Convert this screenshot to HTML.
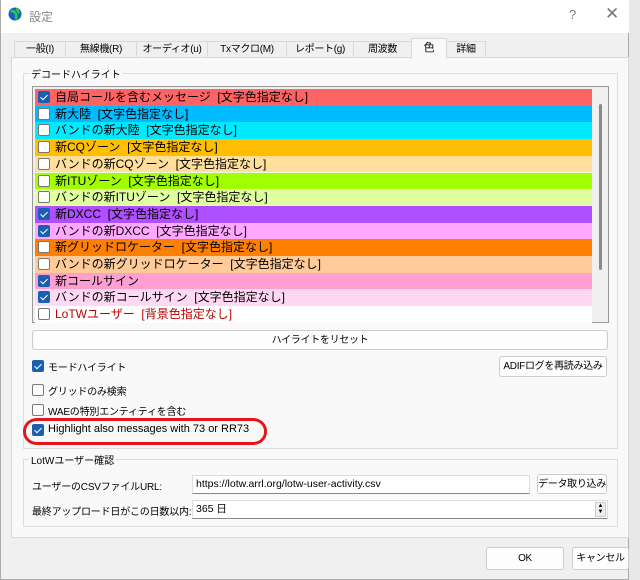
<!DOCTYPE html>
<html><head><meta charset="utf-8"><style>
*{box-sizing:border-box;margin:0;padding:0;white-space:nowrap}
body{width:640px;height:580px;background:#e8e8e8;font-family:"Liberation Sans","Noto Sans CJK JP",sans-serif;font-size:11px;color:#000;position:relative;overflow:hidden}
.win{position:absolute;left:0;top:0;width:629px;height:580px;background:#f0f0f0;border:1px solid #aaa;border-top:none}
.title{position:absolute;left:0;top:0;width:628px;height:33px;background:#fff}
.abs{position:absolute}
.tab{position:absolute;top:41px;height:17px;border:1px solid #d9d9d9;border-bottom:none;background:#f0f0f0;text-align:center;line-height:15px;font-size:10px;letter-spacing:-0.3px;overflow:hidden}
.panel{position:absolute;left:10px;top:57px;width:618px;height:481px;background:#f9f9f9;border:1px solid #d9d9d9}
.group{position:absolute;border:1px solid #dcdcdc}
.glabel{position:absolute;background:#f9f9f9;padding:0 2px;font-size:10px}
.list{position:absolute;left:31px;top:86px;width:577px;height:237px;border:1px solid #999;background:#f0f0f0}
.row{position:absolute;left:2px;width:557px;height:16.7px;line-height:16px;font-size:12px;padding-left:20px}
.cb{position:absolute;width:12px;height:12px;border:1px solid #777;border-radius:2px;background:#fff}
.cb.on{background:#1a5fb4;border-color:#1a5fb4}
.cb.on::after{content:"";position:absolute;left:3px;top:1px;width:3px;height:6px;border:solid #fff;border-width:0 1.3px 1.3px 0;transform:rotate(45deg)}
.row .cb{left:3px;top:2px}
.btn{position:absolute;border:1px solid #ccc;background:#fdfdfd;border-radius:3px;text-align:center;font-size:10px;letter-spacing:-0.3px;overflow:hidden}
.inp{position:absolute;background:#fff;border:1px solid #ddd;border-bottom:1px solid #888;font-size:10.5px;padding-left:3px}
.lbl{position:absolute;font-size:10px;letter-spacing:-0.2px}
</style></head><body>
<div class="win">
<div class="title">
<svg class="abs" style="left:7px;top:7px" width="14" height="14"><circle cx="7" cy="7" r="6.5" fill="#1560c0"/><path d="M3 5c2-2 4 0 5 2s-1 4 1 5M8 2c2 1 3 3 2 4" stroke="#2ecc40" stroke-width="2.5" fill="none"/></svg>
<div class="abs" style="left:28px;top:8px;color:#888;font-size:12px">設定</div>
<div class="abs" style="left:568px;top:7px;color:#777;font-size:13px">?</div>
<div class="abs" style="left:604px;top:4px;color:#777;font-size:17px">✕</div>
</div>
<div class="tab" style="left:13px;width:52px">一般(I)</div>
<div class="tab" style="left:64px;width:72px">無線機(R)</div>
<div class="tab" style="left:135px;width:72px">オーディオ(u)</div>
<div class="tab" style="left:206px;width:80px">Txマクロ(M)</div>
<div class="tab" style="left:285px;width:68px">レポート(g)</div>
<div class="tab" style="left:352px;width:59px">周波数</div>
<div class="tab" style="left:445px;width:40px">詳細</div>
<div class="panel"></div>
<div class="tab" style="left:410px;top:38px;width:36px;height:21px;background:#f9f9f9;line-height:19px;z-index:2;font-size:11px">色</div>
<div class="group" style="left:22px;top:73px;width:595px;height:376px"></div>
<div class="glabel" style="left:28px;top:66px">デコードハイライト</div>
<div class="list">
<div class="row" style="top:2px;background:#ff6464"><span class="cb on"></span>自局コールを含むメッセージ &nbsp;[文字色指定なし]</div>
<div class="row" style="top:18.7px;background:#00bcff"><span class="cb"></span>新大陸 &nbsp;[文字色指定なし]</div>
<div class="row" style="top:35.4px;background:#00eaff"><span class="cb"></span>バンドの新大陸 &nbsp;[文字色指定なし]</div>
<div class="row" style="top:52.1px;background:#ffbf00"><span class="cb"></span>新CQゾーン &nbsp;[文字色指定なし]</div>
<div class="row" style="top:68.8px;background:#ffdf9a"><span class="cb"></span>バンドの新CQゾーン &nbsp;[文字色指定なし]</div>
<div class="row" style="top:85.5px;background:#a2ff00"><span class="cb"></span>新ITUゾーン &nbsp;[文字色指定なし]</div>
<div class="row" style="top:102.2px;background:#e2ffa0"><span class="cb"></span>バンドの新ITUゾーン &nbsp;[文字色指定なし]</div>
<div class="row" style="top:118.9px;background:#b04fff"><span class="cb on"></span>新DXCC &nbsp;[文字色指定なし]</div>
<div class="row" style="top:135.6px;background:#ffa8ff"><span class="cb on"></span>バンドの新DXCC &nbsp;[文字色指定なし]</div>
<div class="row" style="top:152.3px;background:#ff8000"><span class="cb"></span>新グリッドロケーター &nbsp;[文字色指定なし]</div>
<div class="row" style="top:169px;background:#ffcc99"><span class="cb"></span>バンドの新グリッドロケーター &nbsp;[文字色指定なし]</div>
<div class="row" style="top:185.7px;background:#ff9ed0"><span class="cb on"></span>新コールサイン</div>
<div class="row" style="top:202.4px;background:#ffd9f4"><span class="cb on"></span>バンドの新コールサイン &nbsp;[文字色指定なし]</div>
<div class="row" style="top:219.1px;background:#fff;color:#c00000"><span class="cb"></span>LoTWユーザー &nbsp;[背景色指定なし]</div>
<div class="abs" style="left:566px;top:17px;width:3px;height:166px;background:#8a8a8a;border-radius:2px"></div>
</div>
<div class="btn" style="left:31px;top:330px;width:576px;height:20px;line-height:19px">ハイライトをリセット</div>
<span class="cb on" style="left:31px;top:360px"></span><div class="lbl" style="left:47px;top:359px">モードハイライト</div>
<div class="btn" style="left:498px;top:356px;width:108px;height:21px;line-height:20px">ADIFログを再読み込み</div>
<span class="cb" style="left:31px;top:384px"></span><div class="lbl" style="left:47px;top:383px">グリッドのみ検索</div>
<span class="cb" style="left:31px;top:404px"></span><div class="lbl" style="left:47px;top:403px">WAEの特別エンティティを含む</div>
<span class="cb on" style="left:31px;top:424px"></span><div class="lbl" style="left:47px;top:423px;font-size:11px;letter-spacing:0">Highlight also messages with 73 or RR73</div>
<div class="abs" style="left:22px;top:418px;width:244px;height:27px;border:3px solid #e8141c;border-radius:14px/13px"></div>
<div class="group" style="left:22px;top:459px;width:595px;height:68px"></div>
<div class="glabel" style="left:28px;top:452px">LotWユーザー確認</div>
<div class="lbl" style="left:31px;top:478px">ユーザーのCSVファイルURL:</div>
<div class="inp" style="left:191px;top:475px;width:338px;height:19px;line-height:17px">https://lotw.arrl.org/lotw-user-activity.csv</div>
<div class="btn" style="left:536px;top:474px;width:70px;height:20px;line-height:19px">データ取り込み</div>
<div class="lbl" style="left:31px;top:503px">最終アップロード日がこの日数以内:</div>
<div class="inp" style="left:191px;top:500px;width:416px;height:19px;line-height:17px">365 日</div>
<div class="abs" style="left:594px;top:502px;width:11px;height:15px;background:#eee;border:1px solid #ccc;font-size:6px;line-height:6px;text-align:center;white-space:normal">▲<br>▼</div>
<div class="btn" style="left:485px;top:547px;width:78px;height:23px;line-height:22px">OK</div>
<div class="btn" style="left:571px;top:547px;width:57px;height:23px;line-height:22px">キャンセル</div>
</div>
</body></html>
